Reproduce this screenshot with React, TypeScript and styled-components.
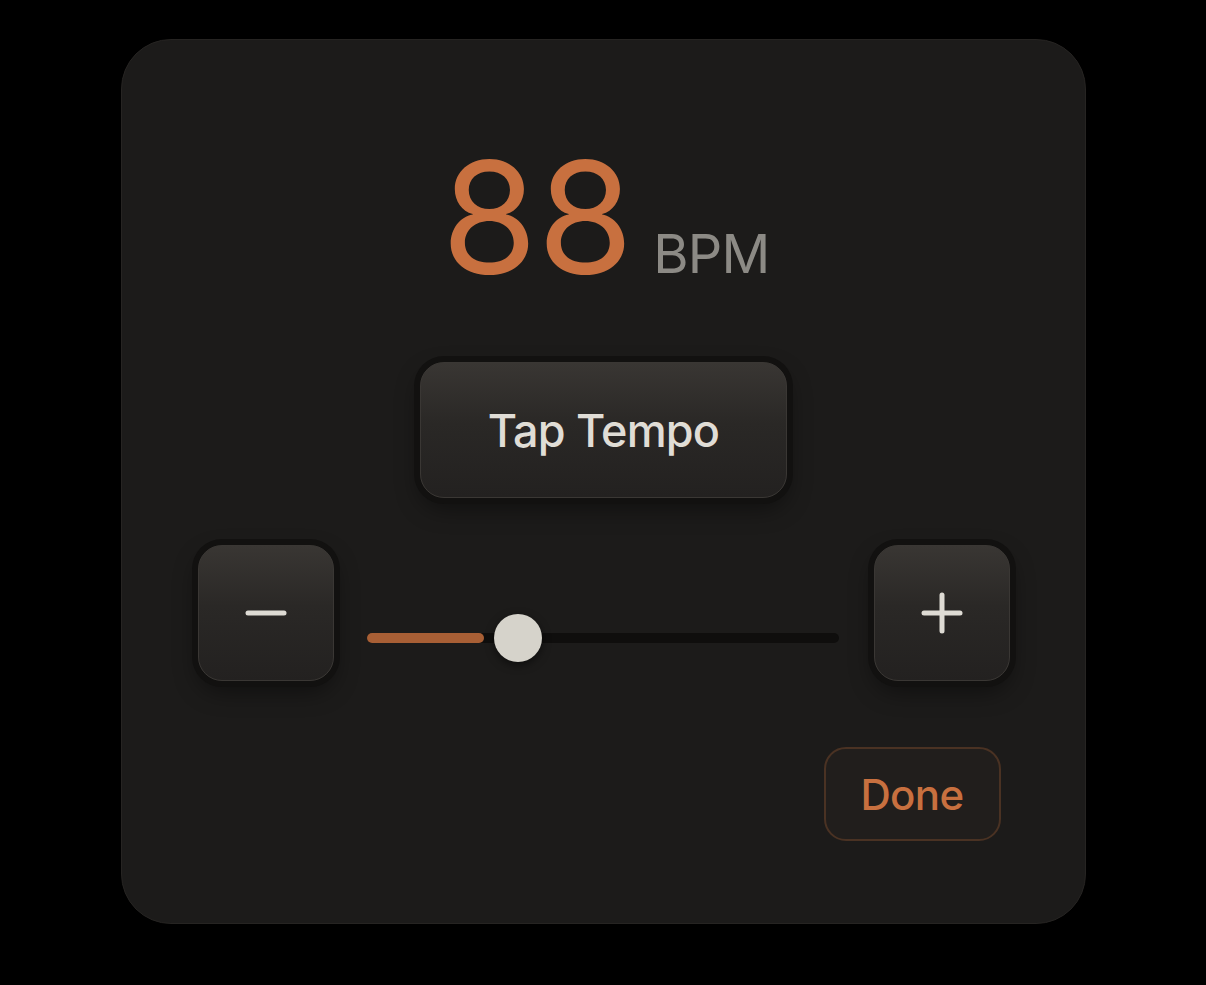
import React from 'react';
import styled, { createGlobalStyle } from 'styled-components';

const GlobalStyle = createGlobalStyle`
  html, body {
    margin: 0;
    padding: 0;
    background: #000;
  }
  body {
    font-family: Inter, "Noto Sans", "Liberation Sans", sans-serif;
  }
`;

const Page = styled.div`
  display: flex;
  justify-content: center;
  padding-top: 39px;
`;

const Card = styled.div`
  box-sizing: border-box;
  width: 965px;
  height: 885px;
  padding: 0 75px 0 76px;
  display: flex;
  flex-direction: column;
  background: #1c1b1a;
  border: 1px solid #262422;
  border-radius: 50px;
`;

const Readout = styled.div`
  margin-top: 99px;
  padding-left: 4px;
  display: flex;
  align-items: baseline;
  justify-content: center;
  gap: 20px;
  line-height: 1;
`;

const Value = styled.span`
  font-size: 155px;
  font-weight: 400;
  letter-spacing: 0;
  color: #c8703f;
`;

const Unit = styled.span`
  font-size: 54px;
  font-weight: 400;
  letter-spacing: -0.8px;
  color: #8c8a85;
`;

const KeyButton = styled.button<{ $wide?: boolean }>`
  box-sizing: border-box;
  width: ${(p) => (p.$wide ? '367px' : '136px')};
  height: 136px;
  flex-shrink: 0;
  display: flex;
  align-items: center;
  justify-content: center;
  padding: 0;
  border: 1.5px solid #3a3734;
  border-radius: 24px;
  background: linear-gradient(180deg, #393633 0%, #2a2826 45%, #232120 100%);
  box-shadow:
    0 0 0 6px #121110,
    0 10px 24px rgba(0, 0, 0, 0.45);
  color: #e0ddd6;
  font-family: inherit;
  font-size: 45px;
  font-weight: 500;
  letter-spacing: -0.8px;
  cursor: pointer;
`;

const TapButton = styled(KeyButton)`
  align-self: center;
  margin-top: 68px;
`;

const Controls = styled.div`
  margin-top: 47px;
  display: flex;
  align-items: flex-start;
`;

const Slider = styled.div`
  position: relative;
  flex: 1;
  height: 48px;
  margin: 69px 35px 0 33px;
`;

const Track = styled.div`
  position: absolute;
  left: 0;
  right: 0;
  top: 19px;
  height: 10px;
  border-radius: 5px;
  background: #0f0e0d;
`;

const Fill = styled.div`
  position: absolute;
  left: 0;
  top: 19px;
  height: 10px;
  border-radius: 5px;
  background: #a85f35;
`;

const Thumb = styled.div`
  position: absolute;
  top: 0;
  width: 48px;
  height: 48px;
  margin-left: -24px;
  border-radius: 50%;
  background: #d6d3cb;
  box-shadow: 0 3px 8px rgba(0, 0, 0, 0.5);
`;

const DoneButton = styled.button`
  box-sizing: border-box;
  align-self: flex-end;
  width: 177px;
  height: 94px;
  margin: 66px 9px 0 0;
  padding: 0;
  border: 2px solid #4a3223;
  border-radius: 22px;
  background: #211e1c;
  color: #c8703f;
  font-family: inherit;
  font-size: 42px;
  font-weight: 500;
  letter-spacing: -0.6px;
  cursor: pointer;
`;

const MinusIcon = () => (
  <svg width="44" height="44" viewBox="0 0 44 44">
    <line x1="4" y1="22" x2="40" y2="22" stroke="#dedbd4" strokeWidth="5" strokeLinecap="round" />
  </svg>
);

const PlusIcon = () => (
  <svg width="44" height="44" viewBox="0 0 44 44">
    <line x1="4" y1="22" x2="40" y2="22" stroke="#dedbd4" strokeWidth="5" strokeLinecap="round" />
    <line x1="22" y1="4" x2="22" y2="40" stroke="#dedbd4" strokeWidth="5" strokeLinecap="round" />
  </svg>
);

const bpm = 88;
const minBpm = 40;
const maxBpm = 190;

const App = () => {
  const pct = ((bpm - minBpm) / (maxBpm - minBpm)) * 100;

  return (
    <>
      <GlobalStyle />
      <Page>
        <Card>
          <Readout>
            <Value>{bpm}</Value>
            <Unit>BPM</Unit>
          </Readout>
          <TapButton $wide>Tap Tempo</TapButton>
          <Controls>
            <KeyButton aria-label="Decrease">
              <MinusIcon />
            </KeyButton>
            <Slider>
              <Track />
              <Fill style={{ width: `calc(${pct}% - 34px)` }} />
              <Thumb style={{ left: `${pct}%` }} />
            </Slider>
            <KeyButton aria-label="Increase">
              <PlusIcon />
            </KeyButton>
          </Controls>
          <DoneButton>Done</DoneButton>
        </Card>
      </Page>
    </>
  );
};

export default App;
